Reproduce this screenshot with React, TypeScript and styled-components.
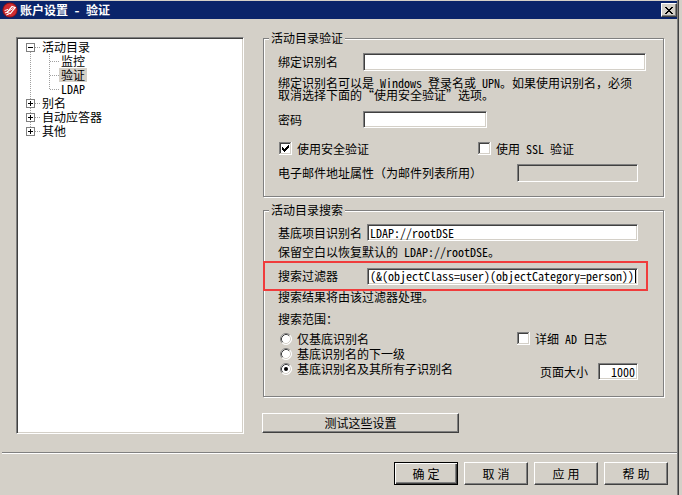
import React from "react";
import styled, { createGlobalStyle, css } from "styled-components";

const FACE = "#d4d0c8";
const SHADOW = "#808080";
const DARK = "#404040";
const WHITE = "#ffffff";
const DOT = "#a0a0a0";
const UI_FONT = `"Noto Sans Mono CJK SC", "Noto Sans CJK SC", "Liberation Sans", sans-serif`;

const GlobalStyle = createGlobalStyle`
  html, body { margin: 0; padding: 0; background: ${FACE}; }
  body { font-family: ${UI_FONT}; font-size: 12px; line-height: 12px; color: #000; }
  *, *::before, *::after { box-sizing: border-box; }
`;

const Window = styled.div`
  width: 679px;
  height: 495px;
  padding-top: 1px;
  border-right: 1px solid ${DARK};
  box-shadow: inset -1px 0 ${SHADOW};
  display: flex;
  flex-direction: column;
  background: ${FACE};
`;

const TitleBar = styled.div`
  height: 18px;
  flex-shrink: 0;
  margin-right: 1px;
  background: #0a246a;
  display: flex;
  align-items: center;
  padding: 0 0 0 2px;
`;

const TitleText = styled.span`
  flex: 1;
  margin-left: 2px;
  color: ${WHITE};
  font-weight: bold;
  font-size: 12px;
  white-space: nowrap;
`;

const CloseButton = styled.div`
  width: 16px;
  height: 14px;
  background: ${FACE};
  border: 1px solid;
  border-color: ${WHITE} ${DARK} ${DARK} ${WHITE};
  box-shadow: inset -1px -1px ${SHADOW};
  display: flex;
  align-items: center;
  justify-content: center;
`;

const Body = styled.div`
  height: 433px;
  flex-shrink: 0;
  display: flex;
  align-items: flex-start;
  padding: 13px 0 0 16px;
`;

const TreePanel = styled.div`
  margin-top: 5px;
  width: 228px;
  height: 397px;
  flex-shrink: 0;
  background: ${WHITE};
  border: 1px solid;
  border-color: ${SHADOW} ${WHITE} ${WHITE} ${SHADOW};
  box-shadow: inset 1px 1px ${DARK}, inset -1px -1px ${FACE};
  padding: 2px 0 0 1px;
  display: flex;
  flex-direction: column;
`;

const TreeRow = styled.div`
  height: 14px;
  display: flex;
  align-items: center;
`;

const TreeLabel = styled.span<{ $selected?: boolean }>`
  height: 14px;
  line-height: 14px;
  padding: 0 2px;
  white-space: nowrap;
  background: ${(p) => (p.$selected ? FACE : "transparent")};
`;

const RightColumn = styled.div`
  margin-left: 18px;
  width: 402px;
  display: flex;
  flex-direction: column;
`;

const Group = styled.fieldset<{ $mt: number }>`
  margin: ${(p) => p.$mt}px 0 0 1px;
  padding: 0;
  width: 401px;
  min-width: 0;
  border: 1px solid ${SHADOW};
  box-shadow: inset 1px 1px ${WHITE}, 1px 1px ${WHITE};
`;

const Legend = styled.legend`
  margin-left: 5px;
  padding: 0 2px;
  height: 12px;
  line-height: 12px;
  background: ${FACE};
  white-space: nowrap;
`;

const GroupBody = styled.div<{ $pb: number }>`
  display: flex;
  flex-direction: column;
  padding: 0 0 ${(p) => p.$pb}px 14px;
`;

const Row = styled.div<{ $mt: number; $h: number }>`
  display: flex;
  align-items: center;
  margin-top: ${(p) => p.$mt}px;
  height: ${(p) => p.$h}px;
  white-space: nowrap;
`;

const FieldLabel = styled.span<{ $w: number }>`
  width: ${(p) => p.$w}px;
  flex-shrink: 0;
  white-space: nowrap;
`;

const TextField = styled.div<{ $w: number; $h: number; $disabled?: boolean; $right?: boolean }>`
  width: ${(p) => p.$w}px;
  height: ${(p) => p.$h}px;
  flex-shrink: 0;
  background: ${(p) => (p.$disabled ? FACE : WHITE)};
  border: 1px solid;
  border-color: ${SHADOW} ${WHITE} ${WHITE} ${SHADOW};
  box-shadow: inset 1px 1px ${DARK}, inset -1px -1px ${FACE};
  padding: 0 ${(p) => (p.$right ? 2 : 1)}px 0 2px;
  display: flex;
  align-items: center;
  justify-content: ${(p) => (p.$right ? "flex-end" : "flex-start")};
  font-family: ${UI_FONT};
  white-space: nowrap;
  overflow: hidden;
`;

const Caret = styled.span`
  width: 1px;
  height: 13px;
  margin-left: 1px;
  background: #000;
  flex-shrink: 0;
`;

const HelpText = styled.div<{ $mt: number }>`
  margin-top: ${(p) => p.$mt}px;
  line-height: 12px;
  white-space: nowrap;
`;

const Quote = styled.span<{ $side: "open" | "close" }>`
  display: inline-block;
  width: 12px;
  text-align: ${(p) => (p.$side === "open" ? "right" : "left")};
`;

const Highlight = styled.div`
  margin: 3px 0 0 -15px;
  width: 385px;
  height: 30px;
  border: 2px solid #f03c3c;
  padding-left: 13px;
  display: flex;
  align-items: center;
  position: relative;
`;

const CheckOption = styled.label<{ $w?: number; $ml?: number }>`
  display: flex;
  align-items: center;
  gap: 5px;
  margin-left: ${(p) => p.$ml ?? 0}px;
  width: ${(p) => (p.$w ? `${p.$w}px` : "auto")};
  flex-shrink: 0;
  white-space: nowrap;
`;

const ScopeGrid = styled.div`
  margin-top: 6px;
  display: grid;
  grid-template-columns: 239px 1fr;
  grid-template-rows: 15px 16px 18px;
`;

const ScopeCell = styled.div<{ $align: "center" | "start" | "end" }>`
  display: flex;
  align-self: ${(p) => p.$align};
  align-items: center;
  height: ${(p) => (p.$align === "end" ? 17 : 14)}px;
  white-space: nowrap;
`;

const RadioOption = styled.label`
  display: flex;
  align-items: center;
  gap: 5px;
  margin-left: 2px;
`;

const PageSizeLabel = styled.span`
  margin-left: 23px;
  width: 58px;
  flex-shrink: 0;
`;

const Button = styled.div<{ $w: number; $h: number; $default?: boolean; $spacing?: number }>`
  width: ${(p) => p.$w}px;
  height: ${(p) => p.$h}px;
  flex-shrink: 0;
  background: ${FACE};
  border: 1px solid;
  border-color: ${WHITE} ${DARK} ${DARK} ${WHITE};
  box-shadow: inset -1px -1px ${SHADOW};
  display: flex;
  align-items: center;
  justify-content: center;
  letter-spacing: ${(p) => p.$spacing ?? 0}px;
  padding-left: ${(p) => p.$spacing ?? 0}px;
  white-space: nowrap;
  ${(p) =>
    p.$default &&
    css`
      border-color: #000;
      box-shadow: inset 1px 1px ${WHITE}, inset -1px -1px ${DARK}, inset -2px -2px ${SHADOW};
    `}
`;

const TestButton = styled(Button)`
  margin-top: 16px;
`;

const Separator = styled.div`
  flex-shrink: 0;
  margin-left: 2px;
  margin-right: 1px;
  height: 2px;
  border-top: 1px solid ${SHADOW};
  border-bottom: 1px solid ${WHITE};
`;

const Footer = styled.div`
  display: flex;
  justify-content: flex-end;
  gap: 6px;
  padding: 8px 10px 10px 0;
`;

/* ---------- drawings ---------- */

const AppIcon = () => (
  <svg width="16" height="16" viewBox="0 0 16 16">
    <circle cx="8" cy="8" r="7.6" fill="#8e1418" />
    <circle cx="8" cy="8" r="6.6" fill="#cf2c32" />
    <path d="M5 10.5 L10 4.5 L13.2 5.6 L8.4 11.6 Z" fill="none" stroke="#fff" strokeWidth="1.2" />
    <path d="M7 9 L11.5 6.2" stroke="#fff" strokeWidth="1" />
    <path d="M2.6 8.6 L6 7.4 M3 11 L6.4 9.6 M4.2 13 L7.6 11.6" stroke="#fff" strokeWidth="1" />
  </svg>
);

const CloseGlyph = () => (
  <svg width="8" height="7" viewBox="0 0 8 7" shapeRendering="crispEdges">
    <path d="M0 0h2v1h-2zM6 0h2v1h-2zM1 1h2v1h-2zM5 1h2v1h-2zM2 2h4v1h-4zM3 3h2v1h-2zM2 4h4v1h-4zM1 5h2v1h-2zM5 5h2v1h-2zM0 6h2v1h-2zM6 6h2v1h-2z" fill="#000" />
  </svg>
);

const Expander = ({ open, first, last }: { open: boolean; first: boolean; last: boolean }) => (
  <svg width="22" height="14" viewBox="0 0 22 14" shapeRendering="crispEdges">
    {!first && <line x1="12.5" y1="0" x2="12.5" y2="3" stroke={DOT} strokeDasharray="1 1" />}
    {!last && <line x1="12.5" y1="12" x2="12.5" y2="14" stroke={DOT} strokeDasharray="1 1" />}
    <line x1="17" y1="7.5" x2="22" y2="7.5" stroke={DOT} strokeDasharray="1 1" />
    <rect x="8.5" y="3.5" width="8" height="8" fill="#fff" stroke={SHADOW} />
    <line x1="10" y1="7.5" x2="15" y2="7.5" stroke="#000" />
    {!open && <line x1="12.5" y1="5" x2="12.5" y2="10" stroke="#000" />}
  </svg>
);

const ChildConnector = ({ last }: { last: boolean }) => (
  <svg width="41" height="14" viewBox="0 0 41 14" shapeRendering="crispEdges">
    <line x1="12.5" y1="0" x2="12.5" y2="14" stroke={DOT} strokeDasharray="1 1" />
    <line x1="31.5" y1="0" x2="31.5" y2={last ? 8 : 14} stroke={DOT} strokeDasharray="1 1" />
    <line x1="32" y1="7.5" x2="41" y2="7.5" stroke={DOT} strokeDasharray="1 1" />
  </svg>
);

const CheckBox = ({ checked }: { checked?: boolean }) => (
  <svg width="13" height="13" viewBox="0 0 13 13" shapeRendering="crispEdges">
    <rect x="0" y="0" width="13" height="13" fill={WHITE} />
    <rect x="0" y="0" width="12" height="1" fill={SHADOW} />
    <rect x="0" y="0" width="1" height="12" fill={SHADOW} />
    <rect x="1" y="1" width="10" height="1" fill={DARK} />
    <rect x="1" y="1" width="1" height="10" fill={DARK} />
    <rect x="1" y="11" width="11" height="1" fill={FACE} />
    <rect x="11" y="1" width="1" height="11" fill={FACE} />
    {checked && (
      <path
        d="M9 3h1v1h-1zM8 4h2v1h-2zM3 5h1v1h-1zM7 5h3v1h-3zM3 6h2v1h-2zM6 6h3v1h-3zM3 7h5v1h-5zM4 8h3v1h-3zM5 9h1v1h-1z"
        fill="#000"
      />
    )}
  </svg>
);

const Radio = ({ checked }: { checked?: boolean }) => (
  <svg width="12" height="12" viewBox="0 0 12 12">
    <circle cx="6" cy="6" r="5.5" fill={WHITE} />
    <path d="M2.11 9.89 A5.5 5.5 0 0 1 9.89 2.11" fill="none" stroke={SHADOW} />
    <path d="M9.89 2.11 A5.5 5.5 0 0 1 2.11 9.89" fill="none" stroke={WHITE} />
    <path d="M2.82 9.18 A4.5 4.5 0 0 1 9.18 2.82" fill="none" stroke={DARK} />
    <path d="M9.18 2.82 A4.5 4.5 0 0 1 2.82 9.18" fill="none" stroke={FACE} />
    {checked && <circle cx="6" cy="6" r="2" fill="#000" />}
  </svg>
);

/* ---------- data ---------- */

type Node = { label: string; children?: string[] };
const tree: Node[] = [
  { label: "活动目录", children: ["监控", "验证", "LDAP"] },
  { label: "别名" },
  { label: "自动应答器" },
  { label: "其他" },
];
const selected = "验证";

export default function App() {
  return (
    <>
      <GlobalStyle />
      <Window>
        <TitleBar>
          <AppIcon />
          <TitleText>账户设置 - 验证</TitleText>
          <CloseButton>
            <CloseGlyph />
          </CloseButton>
        </TitleBar>

        <Body>
          <TreePanel>
            {tree.map((node, i) => (
              <React.Fragment key={node.label}>
                <TreeRow>
                  <Expander open={!!node.children} first={i === 0} last={i === tree.length - 1} />
                  <TreeLabel>{node.label}</TreeLabel>
                </TreeRow>
                {node.children?.map((child, j) => (
                  <TreeRow key={child}>
                    <ChildConnector last={j === node.children!.length - 1} />
                    <TreeLabel $selected={child === selected}>{child}</TreeLabel>
                  </TreeRow>
                ))}
              </React.Fragment>
            ))}
          </TreePanel>

          <RightColumn>
            <Group $mt={0}>
              <Legend>活动目录验证</Legend>
              <GroupBody $pb={14}>
                <Row $mt={9} $h={18}>
                  <FieldLabel $w={85}>绑定识别名</FieldLabel>
                  <TextField $w={283} $h={18} />
                </Row>
                <HelpText $mt={6}>
                  绑定识别名可以是 Windows 登录名或 UPN。如果使用识别名，必须
                  <br />
                  取消选择下面的<Quote $side="open">“</Quote>使用安全验证<Quote $side="close">”</Quote>选项。
                </HelpText>
                <Row $mt={10} $h={17}>
                  <FieldLabel $w={85}>密码</FieldLabel>
                  <TextField $w={124} $h={17} />
                </Row>
                <Row $mt={14} $h={13}>
                  <CheckOption $w={199} $ml={1}>
                    <CheckBox checked />
                    使用安全验证
                  </CheckOption>
                  <CheckOption>
                    <CheckBox />
                    使用 SSL 验证
                  </CheckOption>
                </Row>
                <Row $mt={9} $h={18}>
                  <FieldLabel $w={239}>电子邮件地址属性（为邮件列表所用）</FieldLabel>
                  <TextField $w={121} $h={18} $disabled />
                </Row>
              </GroupBody>
            </Group>

            <Group $mt={7}>
              <Legend>活动目录搜索</Legend>
              <GroupBody $pb={16}>
                <Row $mt={8} $h={17}>
                  <FieldLabel $w={89}>基底项目识别名</FieldLabel>
                  <TextField $w={271} $h={17}>LDAP://rootDSE</TextField>
                </Row>
                <HelpText $mt={5}>保留空白以恢复默认的 LDAP://rootDSE。</HelpText>
                <Highlight>
                  <FieldLabel $w={89}>搜索过滤器</FieldLabel>
                  <TextField $w={271} $h={17}>
                    (&amp;(objectClass=user)(objectCategory=person))
                    <Caret />
                  </TextField>
                </Highlight>
                <HelpText $mt={0}>搜索结果将由该过滤器处理。</HelpText>
                <HelpText $mt={10}>搜索范围：</HelpText>
                <ScopeGrid>
                  <ScopeCell $align="center">
                    <RadioOption>
                      <Radio />
                      仅基底识别名
                    </RadioOption>
                  </ScopeCell>
                  <ScopeCell $align="center">
                    <CheckOption>
                      <CheckBox />
                      详细 AD 日志
                    </CheckOption>
                  </ScopeCell>
                  <ScopeCell $align="center">
                    <RadioOption>
                      <Radio />
                      基底识别名的下一级
                    </RadioOption>
                  </ScopeCell>
                  <ScopeCell $align="center" />
                  <ScopeCell $align="start">
                    <RadioOption>
                      <Radio checked />
                      基底识别名及其所有子识别名
                    </RadioOption>
                  </ScopeCell>
                  <ScopeCell $align="end">
                    <PageSizeLabel>页面大小</PageSizeLabel>
                    <TextField $w={40} $h={17} $right>
                      1000
                    </TextField>
                  </ScopeCell>
                </ScopeGrid>
              </GroupBody>
            </Group>

            <TestButton $w={197} $h={20}>
              测试这些设置
            </TestButton>
          </RightColumn>
        </Body>

        <Separator />
        <Footer>
          <Button $w={64} $h={23} $default $spacing={3}>
            确定
          </Button>
          <Button $w={64} $h={23} $spacing={3}>
            取消
          </Button>
          <Button $w={64} $h={23} $spacing={3}>
            应用
          </Button>
          <Button $w={64} $h={23} $spacing={3}>
            帮助
          </Button>
        </Footer>
      </Window>
    </>
  );
}
